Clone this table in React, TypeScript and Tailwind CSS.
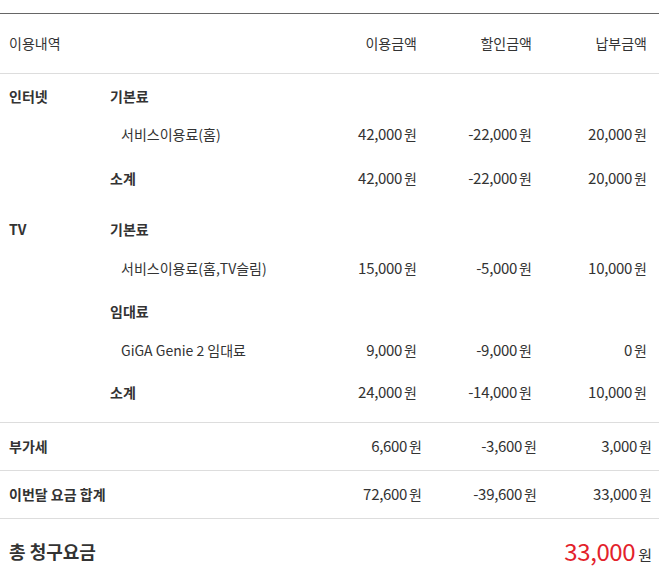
import React from "react";

type Row = {
  cat?: string;
  label: string;
  kind: "head" | "item" | "sub";
  top: number;
  a?: string;
  b?: string;
  c?: string;
};

const Won = ({ v }: { v?: string }) =>
  v ? (
    <span className="whitespace-nowrap">
      <span className="text-[15px] tracking-[-0.3px]">{v}</span>
      <span className="ml-[2px] text-[14px]">원</span>
    </span>
  ) : null;

const BodyRow = ({ r }: { r: Row }) => (
  <div className="flex h-[20px] items-center leading-[20px]" style={{ marginTop: r.top }}>
    <div className="w-[110px] shrink-0 pl-[9px] font-bold">{r.cat}</div>
    <div className={r.kind === "item" ? "flex-1 pl-[11px]" : "flex-1 font-bold"}>{r.label}</div>
    <div className="w-[115px] text-right">
      <Won v={r.a} />
    </div>
    <div className="w-[115px] text-right">
      <Won v={r.b} />
    </div>
    <div className="w-[115px] text-right">
      <Won v={r.c} />
    </div>
  </div>
);

const rows: Row[] = [
  { cat: "인터넷", label: "기본료", kind: "head", top: 12 },
  { label: "서비스이용료(홈)", kind: "item", top: 18, a: "42,000", b: "-22,000", c: "20,000" },
  { label: "소계", kind: "sub", top: 24, a: "42,000", b: "-22,000", c: "20,000" },
  { cat: "TV", label: "기본료", kind: "head", top: 31 },
  { label: "서비스이용료(홈,TV슬림)", kind: "item", top: 19, a: "15,000", b: "-5,000", c: "10,000" },
  { label: "임대료", kind: "head", top: 23 },
  { label: "GiGA Genie 2 임대료", kind: "item", top: 19, a: "9,000", b: "-9,000", c: "0" },
  { label: "소계", kind: "sub", top: 22, a: "24,000", b: "-14,000", c: "10,000" },
];

export default function App() {
  return (
    <div
      className="w-[659px] h-[585px] bg-white text-[14px] text-[#333] overflow-hidden"
      style={{ fontFamily: "'Noto Sans CJK KR', 'Noto Sans', sans-serif" }}
    >
      <div className="h-[13px]" />
      <div className="border-t border-[#666]" />
      <div className="flex h-[60px] items-center border-b border-[#ddd] pr-[12px]">
        <div className="flex-1 pl-[9px]">이용내역</div>
        <div className="w-[115px] text-right">이용금액</div>
        <div className="w-[115px] text-right">할인금액</div>
        <div className="w-[115px] text-right">납부금액</div>
      </div>
      <div className="border-b border-[#ddd] pb-[20px] pr-[12px]">
        {rows.map((r, i) => (
          <BodyRow key={i} r={r} />
        ))}
      </div>
      <div className="flex h-[48px] items-center border-b border-[#ddd] pr-[7px]">
        <div className="flex-1 pl-[9px] font-bold">부가세</div>
        <div className="w-[115px] text-right"><Won v="6,600" /></div>
        <div className="w-[115px] text-right"><Won v="-3,600" /></div>
        <div className="w-[115px] text-right"><Won v="3,000" /></div>
      </div>
      <div className="flex h-[48px] items-center border-b border-[#ddd] pr-[7px]">
        <div className="flex-1 pl-[9px] font-bold">이번달 요금 합계</div>
        <div className="w-[115px] text-right"><Won v="72,600" /></div>
        <div className="w-[115px] text-right"><Won v="-39,600" /></div>
        <div className="w-[115px] text-right"><Won v="33,000" /></div>
      </div>
      <div className="flex h-[64px] items-center pr-[7px]">
        <div className="flex-1 pl-[9px] text-[18px] font-bold">총 청구요금</div>
        <div className="flex items-baseline">
          <span className="text-[24px] text-[#e3212b] tracking-[-0.4px]">33,000</span>
          <span className="ml-[3px] text-[15px]">원</span>
        </div>
      </div>
    </div>
  );
}
